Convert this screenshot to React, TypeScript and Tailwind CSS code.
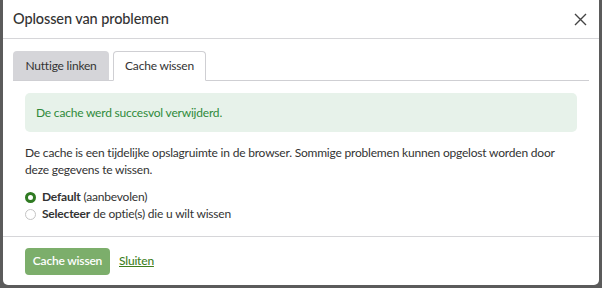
import { useState } from "react";

const App = () => {
  const [tab, setTab] = useState<"links" | "cache">("cache");
  const [option, setOption] = useState<"default" | "select">("default");

  return (
    <div
      className="h-[288px] w-[602px] overflow-hidden bg-[#5b5b5b] pl-[3px] tracking-[-0.2px]"
      style={{ fontFamily: 'Lato, "Noto Sans", sans-serif' }}
    >
      <div className="flex h-[285px] w-[596px] flex-col rounded-b-[5px] bg-white text-[#333]">
        {/* header */}
        <div className="flex h-[39px] items-center justify-between border-b border-[#d6d6d9] pl-[10px] pr-[12px]">
          <h1 className="text-[14.5px] font-medium tracking-[-0.1px] text-[#333]">Oplossen van problemen</h1>
          <button className="text-[#444]" aria-label="Sluiten">
            <svg width="13" height="13" viewBox="0 0 13 13" stroke="currentColor" strokeWidth="1.4">
              <path d="M1 1L12 12M12 1L1 12" />
            </svg>
          </button>
        </div>

        {/* body */}
        <div className="flex-1 px-[10px] pt-[12px]">
          <div className="flex h-[30px] items-end gap-[4px] border-b border-[#cfcfd3]">
            <button
              onClick={() => setTab("links")}
              className={
                tab === "links"
                  ? "-mb-px h-[30px] w-[96px] rounded-t-[4px] border border-b-white border-[#cfcfd3] bg-white text-[12px]"
                  : "h-[29px] w-[96px] rounded-t-[4px] bg-[#d5d5d9] text-[12px]"
              }
            >
              Nuttige linken
            </button>
            <button
              onClick={() => setTab("cache")}
              className={
                tab === "cache"
                  ? "-mb-px h-[30px] w-[93px] rounded-t-[4px] border border-b-white border-[#cfcfd3] bg-white text-[12px]"
                  : "h-[29px] w-[93px] rounded-t-[4px] bg-[#d5d5d9] text-[12px]"
              }
            >
              Cache wissen
            </button>
          </div>

          <div className="px-[12px] pt-[12px]">
            <div className="flex h-[39px] items-center rounded-[5px] bg-[#e7f2ea] px-[11px] text-[12px] text-[#2f8a3a]">
              De cache werd succesvol verwijderd.
            </div>

            <p className="mt-[12px] text-[12px] leading-[17px] text-[#333]">
              De cache is een tijdelijke opslagruimte in de browser. Sommige problemen kunnen opgelost worden door
              deze gegevens te wissen.
            </p>

            <div className="mt-[11px] flex flex-col gap-[1px] text-[12px]">
              <label className="flex h-[16px] items-center gap-[6px]" onClick={() => setOption("default")}>
                <span
                  className={
                    option === "default"
                      ? "h-[11px] w-[11px] rounded-full border-[3px] border-[#2f7a22] bg-white"
                      : "h-[11px] w-[11px] rounded-full border border-[#c4c4c4] bg-white"
                  }
                />
                <span>
                  <strong className="font-bold">Default</strong> (aanbevolen)
                </span>
              </label>
              <label className="flex h-[16px] items-center gap-[6px]" onClick={() => setOption("select")}>
                <span
                  className={
                    option === "select"
                      ? "h-[11px] w-[11px] rounded-full border-[3px] border-[#2f7a22] bg-white"
                      : "h-[11px] w-[11px] rounded-full border border-[#c4c4c4] bg-white"
                  }
                />
                <span>
                  <strong className="font-bold">Selecteer</strong> de optie(s) die u wilt wissen
                </span>
              </label>
            </div>
          </div>
        </div>

        {/* footer */}
        <div className="flex h-[49px] items-center gap-[9px] border-t border-[#d6d6d9] px-[22px]">
          <button className="h-[27px] w-[85px] rounded-[4px] bg-[#7cae6b] text-[12px] font-semibold text-white">
            Cache wissen
          </button>
          <a href="#" className="text-[12px] font-medium text-[#3f7f1f] underline">
            Sluiten
          </a>
        </div>
      </div>
    </div>
  );
};

export default App;
